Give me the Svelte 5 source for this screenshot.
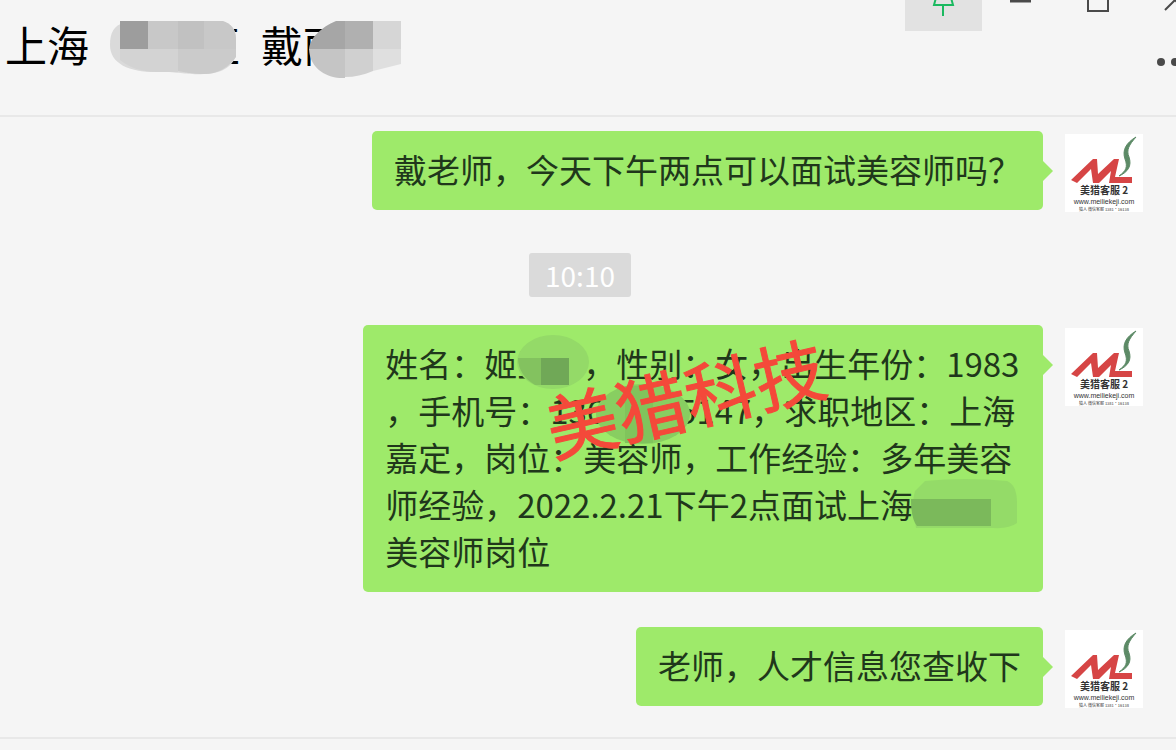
<script lang="ts">
	let pinned = $state(true);
</script>

{#snippet avatar()}
	<svg class="avatar" viewBox="0 0 78 78" role="img" aria-label="美猎客服2">
		<rect width="78" height="78" fill="#fff" />
		<path d="M6 46 28 25H32L33 40 49 25H54L50 43H67V49H44L46 37 34 49H28L26 35 12 49Z" fill="#d64545" />
		<path d="M54 42C61 37 63 33 60 25C57 16 61 9 71 3C64 11 61 16 64 23C67 32 63 38 54 42Z" fill="#5c8a66" stroke="#5c8a66" />
		<text x="39" y="60" class="name">美猎客服 2</text>
		<text x="39" y="70" class="site">www.meiliekeji.com</text>
		<text x="39" y="77" class="line">猎人 微信客服 1381·16138</text>
	</svg>
{/snippet}

<div class="window">
	<header>
		<h1>
			<span>上海</span>
			<span class="company">区
				<svg class="mask" width="132" height="60" viewBox="0 0 132 60" aria-hidden="true">
					<path d="M14 8H114C121 8 126 14 126 24V40C123 52 110 59 94 59C76 60 72 57 50 57C22 58 0 50 0 30C0 18 4 10 14 8Z" fill="#dadada" />
					<path d="M10 6H113C120 8 126 14 126 24V35H10Z" fill="#c8c8c8" />
					<path d="M68 6H94V35H68Z" fill="#c1c1c1" />
					<path d="M10 34H68V57H48C32 57 20 53 10 45Z" fill="#d3d3d3" />
					<path d="M68 34H126V42C118 53 107 59 94 59C82 59 75 57 68 56Z" fill="#cbcbcb" />
					<rect x="10" y="6" width="28" height="28" fill="#9d9d9d" />
				</svg>
			</span>
			<span class="person">戴丽
				<svg class="mask" width="96" height="64" viewBox="0 0 96 64" aria-hidden="true">
					<path d="M29 6H38V35H2C2 24 14 12 29 6Z" fill="#a6a6a6" />
					<rect x="38" y="6" width="28" height="28" fill="#b0b0b0" />
					<rect x="66" y="6" width="28" height="28" fill="#d6d6d6" />
					<path d="M2 34H38V63C23 64 3 56 2 34Z" fill="#c5c5c5" />
					<path d="M38 34H66V56C56 60 48 62 38 62Z" fill="#d0d0d0" />
					<path d="M66 34H94V49L66 56Z" fill="#dfdfdf" />
				</svg>
			</span>
		</h1>
		<div class="tools">
			<div class="controls">
				<button class:pinned aria-label="置顶" aria-pressed={pinned} onclick={() => (pinned = !pinned)}>
					<svg width="77" height="31" viewBox="0 0 77 31">
						<path d="M32 -6 29 5H48L45 -6M38 5V16" fill="none" stroke="#1bb960" stroke-width="2" />
					</svg>
				</button>
				<button aria-label="最小化">
					<svg width="77" height="31" viewBox="0 0 77 31"><path d="M28 1H49" stroke="#4a4a4a" stroke-width="3" /></svg>
				</button>
				<button aria-label="最大化">
					<svg width="77" height="31" viewBox="0 0 77 31"><path d="M29 -9H49V11H29Z" fill="none" stroke="#4a4a4a" stroke-width="2" /></svg>
				</button>
				<button aria-label="关闭">
					<svg width="77" height="31" viewBox="0 0 77 31"><path d="M29 10 49 -10M29 -10 49 10" stroke="#4a4a4a" stroke-width="2" /></svg>
				</button>
			</div>
			<button class="more" aria-label="聊天信息">
				<svg width="77" height="31" viewBox="0 0 77 31" fill="#4a4a4a">
					<circle cx="25" cy="16" r="4" /><circle cx="39" cy="16" r="4" /><circle cx="53" cy="16" r="4" />
				</svg>
			</button>
		</div>
	</header>

	<main>
		<div class="message">
			<p class="bubble">戴老师，今天下午两点可以面试美容师吗？</p>
			{@render avatar()}
		</div>

		<time datetime="10:10">10:10</time>

		<div class="message">
			<p class="bubble">
				姓名：姬<span class="given">王<svg class="mask" width="74" height="56" viewBox="0 0 74 56" aria-hidden="true">
					<ellipse cx="36" cy="28" rx="36" ry="27" fill="#94da68" />
					<path d="M1 24H24V51H18C8 45 1 36 1 24Z" fill="#83c25f" />
					<rect x="24" y="24" width="28" height="27" fill="#70a857" />
				</svg></span>，性别：女，出生年份：1983<br />
				，手机号：136<span class="digits"><svg class="mask" width="96" height="62" viewBox="0 0 96 62" aria-hidden="true">
					<ellipse cx="47" cy="31" rx="47" ry="30" fill="#88ce61" />
					<path d="M29 3H57V60H29Z" fill="#80c45c" />
				</svg></span>5147，求职地区：上海<br />
				嘉定，岗位：美容师，工作经验：多年美容<br />
				师经验，2022.2.21下午2点面试上海<span class="place"><svg class="mask" width="108" height="50" viewBox="0 0 108 50" aria-hidden="true">
					<path d="M14 2Q54 -2 96 2Q106 6 106 24V44Q98 50 82 49H5Q0 24 4 12Z" fill="#94db68" />
					<path d="M0 20H80V47H6Q0 40 0 20Z" fill="#7bb95b" />
				</svg></span><br />
				美容师岗位
				<span class="watermark">美猎科技</span>
			</p>
			{@render avatar()}
		</div>

		<div class="message">
			<p class="bubble">老师，人才信息您查收下</p>
			{@render avatar()}
		</div>
	</main>
	<footer></footer>
</div>

<style>
	:global(body) {
		margin: 0;
		background: #f5f5f5;
		font-family: 'Noto Sans CJK SC', sans-serif;
	}

	.window {
		display: flex;
		flex-direction: column;
		min-height: 100vh;
		overflow: hidden;
	}

	header {
		display: flex;
		justify-content: space-between;
		height: 115px;
		border-bottom: 2px solid #e8e8e8;
	}

	h1 {
		display: flex;
		gap: 21px;
		margin: 0;
		padding: 14px 0 0 5px;
		color: #000;
		font-size: 42px;
		font-weight: 400;
		line-height: 60px;
		white-space: nowrap;
	}

	.company,
	.person,
	.given,
	.digits,
	.place {
		position: relative;
	}

	.company {
		width: 130px;
		text-align: right;
	}

	.mask {
		position: absolute;
	}

	.company .mask {
		top: 1px;
		left: 0;
	}

	.person .mask {
		top: 1px;
		left: 46px;
	}

	.tools {
		flex: none;
		margin-right: -37px;
	}

	.controls {
		display: flex;
	}

	button {
		display: block;
		padding: 0;
		border: none;
		background: none;
		cursor: pointer;
	}

	button svg {
		display: block;
	}

	.pinned {
		background: #e2e2e2;
	}

	.more {
		margin: 15px 0 0 auto;
	}

	main {
		display: flex;
		flex-direction: column;
		padding: 14px 33px 29px 17px;
		border-bottom: 2px solid #e8e8e8;
	}

	.message {
		display: flex;
		justify-content: flex-end;
		align-items: flex-start;
		gap: 22px;
	}

	.message + .message {
		margin-top: 35px;
	}

	.bubble {
		position: relative;
		margin: 0;
		padding: 15px 22px 17px;
		border-radius: 5px;
		background: #9eea6a;
		color: #20371b;
		font-size: 33px;
		line-height: 47px;
		white-space: nowrap;
	}

	.bubble::after {
		content: '';
		position: absolute;
		top: 30px;
		left: 100%;
		border: 10px solid transparent;
		border-left-color: #9eea6a;
		border-right: none;
	}

	.given,
	.digits,
	.place {
		display: inline-block;
	}

	.given {
		width: 66px;
	}

	.given .mask {
		top: -6px;
		left: 0;
	}

	.digits {
		width: 73px;
		height: 1px;
	}

	.digits .mask {
		top: -40px;
		left: -9px;
	}

	.place {
		width: 108px;
		height: 1px;
	}

	.place .mask {
		top: -38px;
		left: -2px;
	}

	.watermark {
		position: absolute;
		top: 18px;
		left: 180px;
		color: #f4493a;
		font-size: 71px;
		font-weight: 400;
		line-height: 104px;
		transform: rotate(-13deg);
		-webkit-text-stroke: 1px #f4493a;
	}

	time {
		align-self: center;
		margin: 41px 0 28px;
		padding: 0 16px;
		border-radius: 3px;
		background: #dadada;
		color: #fff;
		font-size: 28px;
		line-height: 44px;
	}

	.avatar {
		flex: none;
		width: 78px;
		height: 78px;
		margin-top: 3px;
	}

	.avatar text {
		fill: #333;
		text-anchor: middle;
	}

	.avatar .name {
		font-size: 10px;
		font-weight: 700;
	}

	.avatar .site {
		font-family: 'Liberation Sans', sans-serif;
		font-size: 7px;
	}

	.avatar .line {
		font-size: 4px;
	}

	footer {
		flex: 1;
	}
</style>
